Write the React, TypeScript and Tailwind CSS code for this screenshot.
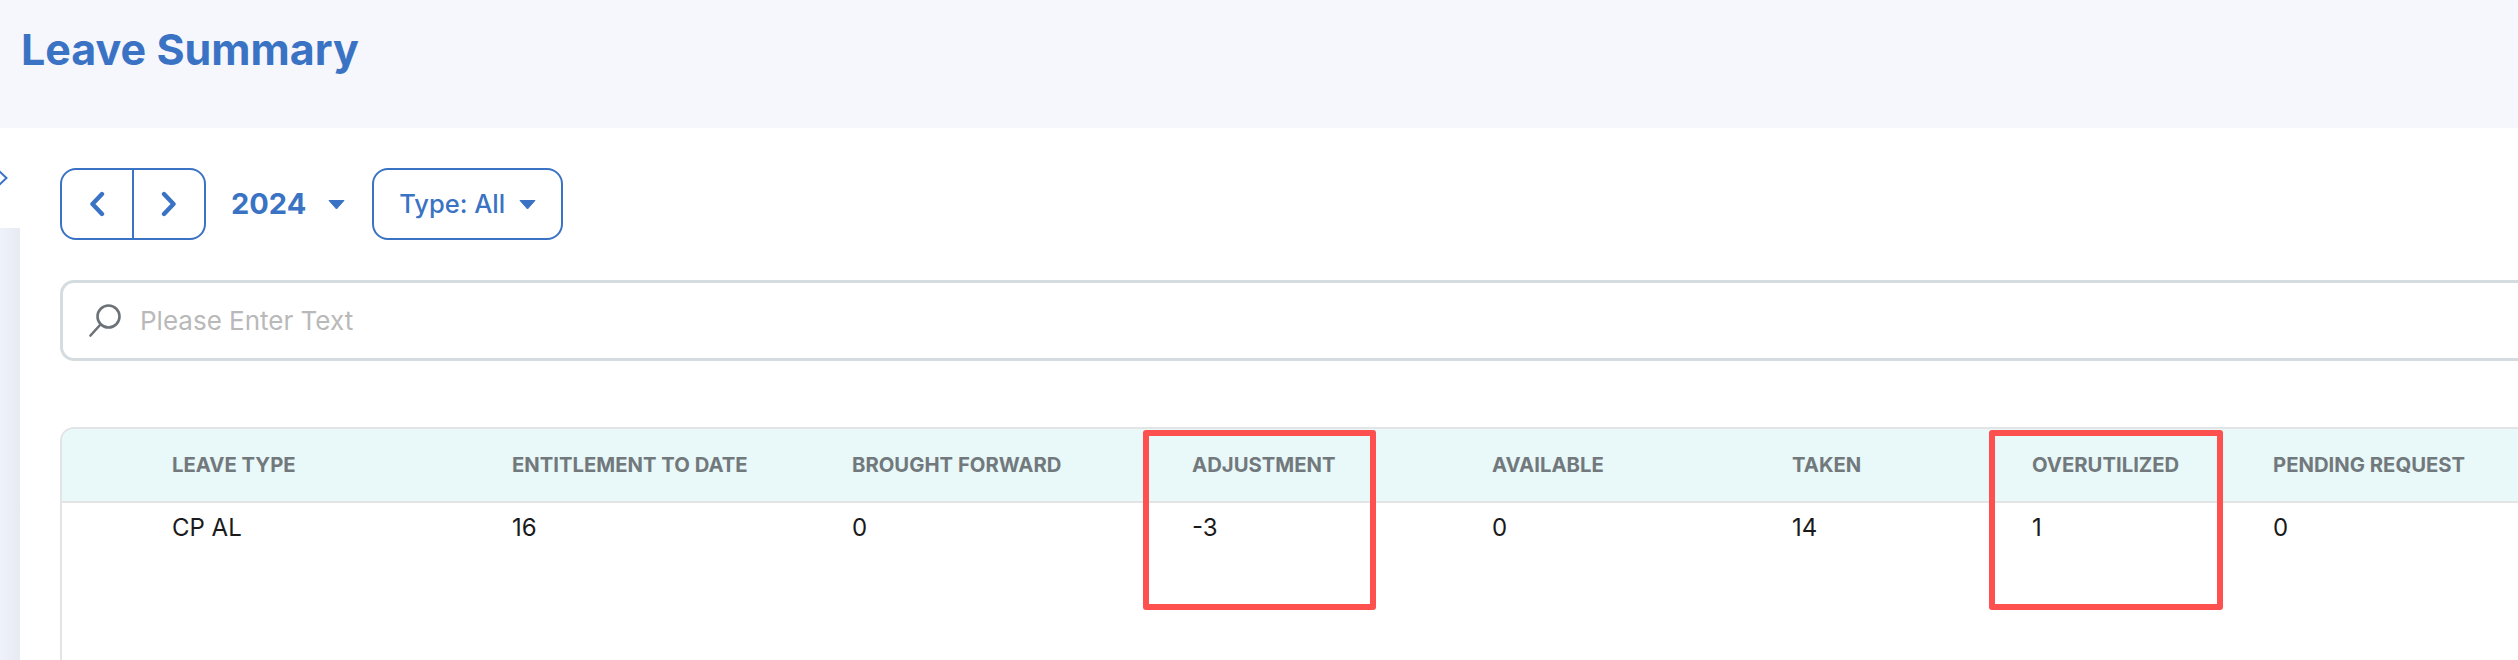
import React from "react";

const columns = [
  { label: "LEAVE TYPE", value: "CP AL" },
  { label: "ENTITLEMENT TO DATE", value: "16" },
  { label: "BROUGHT FORWARD", value: "0" },
  { label: "ADJUSTMENT", value: "-3" },
  { label: "AVAILABLE", value: "0" },
  { label: "TAKEN", value: "14" },
  { label: "OVERUTILIZED", value: "1" },
  { label: "PENDING REQUEST", value: "0" },
];

const gridCols = "grid grid-cols-[340px_340px_340px_300px_300px_240px_241px_1fr] pl-[110px]";

const Caret: React.FC = () => (
  <svg width="17" height="11" viewBox="0 0 17 11" aria-hidden="true">
    <path d="M1 1.5h15L8.5 10z" fill="#3b73c4" stroke="#3b73c4" strokeWidth="1" strokeLinejoin="round" />
  </svg>
);

const Chevron: React.FC<{ dir: "left" | "right" }> = ({ dir }) => (
  <svg width="16" height="26" viewBox="0 0 16 26" fill="none" aria-hidden="true">
    <path
      d={dir === "left" ? "M13 3 3.5 13 13 23" : "M3 3l9.5 10L3 23"}
      stroke="#3b73c4"
      strokeWidth="4.4"
      strokeLinecap="round"
      strokeLinejoin="round"
    />
  </svg>
);

const SearchIcon: React.FC = () => (
  <svg width="32" height="33" viewBox="0 0 32 33" fill="none" aria-hidden="true">
    <circle cx="19.5" cy="12.5" r="11" stroke="#6b7278" strokeWidth="2.6" />
    <path d="M11.5 20.5 1.5 31.5" stroke="#6b7278" strokeWidth="2.6" strokeLinecap="round" />
  </svg>
);

const App: React.FC = () => {
  return (
    <div className="relative h-[660px] w-[2518px] overflow-hidden bg-white font-['Inter',sans-serif]">
      <header className="flex h-[128px] items-start bg-[#f5f7fc] pl-[21px] pt-[19px]">
        <h1 className="text-[43px] leading-[60px] font-bold text-[#3b73c4]">Leave Summary</h1>
      </header>

      <div className="flex">
        <aside className="flex w-[20px] shrink-0 flex-col">
          <div className="h-[100px] pt-[38px]">
            <svg width="8" height="24" viewBox="0 0 8 24" fill="none" aria-hidden="true">
              <path d="M-4 2 6.5 12-4 22" stroke="#3b73c4" strokeWidth="2" />
            </svg>
          </div>
          <div className="h-[432px] bg-gradient-to-r from-[#eef2fb] to-[#e8eaf2]" />
        </aside>

        <main className="min-w-0 flex-1 pl-[40px] pt-[40px]">
          <div className="flex h-[72px] items-center">
            <div className="flex h-full w-[146px] rounded-[16px] border-2 border-[#3b73c4]">
              <button className="flex w-[72px] items-center justify-center border-r-2 border-[#3b73c4]">
                <Chevron dir="left" />
              </button>
              <button className="flex flex-1 items-center justify-center">
                <Chevron dir="right" />
              </button>
            </div>
            <button className="ml-[25px] flex items-center gap-[22px] text-[29px] font-bold text-[#3b73c4]">
              2024
              <Caret />
            </button>
            <button className="ml-[27px] flex h-full w-[191px] items-center gap-[14px] rounded-[16px] border-2 border-[#3b73c4] pl-[25px] text-[25.5px] font-medium text-[#3b73c4]">
              Type: All
              <Caret />
            </button>
          </div>

          <div className="mt-[40px] flex h-[81px] items-center gap-[19px] rounded-l-[14px] border-y-[3px] border-l-[3px] border-[#d5dce0] pl-[26px]">
            <SearchIcon />
            <span className="text-[26px] text-[#b9b9b9]">Please Enter Text</span>
          </div>

          <div className="mt-[66px] h-[300px] rounded-tl-[14px] border-t-2 border-l-2 border-[#e2e4e6]">
            <div className={`${gridCols} h-[74px] items-start rounded-tl-[12px] border-b-2 border-[#e2e4e6] bg-[#e9f8f8] pt-[22px]`}>
              {columns.map((c) => (
                <div key={c.label} className="text-[20.3px] leading-[28px] font-bold whitespace-nowrap text-[#72797d]">
                  {c.label}
                </div>
              ))}
            </div>
            <div className={`${gridCols} pt-[10px]`}>
              {columns.map((c) => (
                <div key={c.label} className="text-[24px] leading-[30px] text-[#1a1a1a]">
                  {c.value}
                </div>
              ))}
            </div>
          </div>
        </main>
      </div>

      {/* annotation boxes drawn over the screenshot */}
      <div className="absolute top-[430px] left-[1143px] h-[180px] w-[233px] rounded-[3px] border-[6px] border-[#ff5050]" />
      <div className="absolute top-[430px] left-[1989px] h-[180px] w-[234px] rounded-[3px] border-[6px] border-[#ff5050]" />
    </div>
  );
};

export default App;
